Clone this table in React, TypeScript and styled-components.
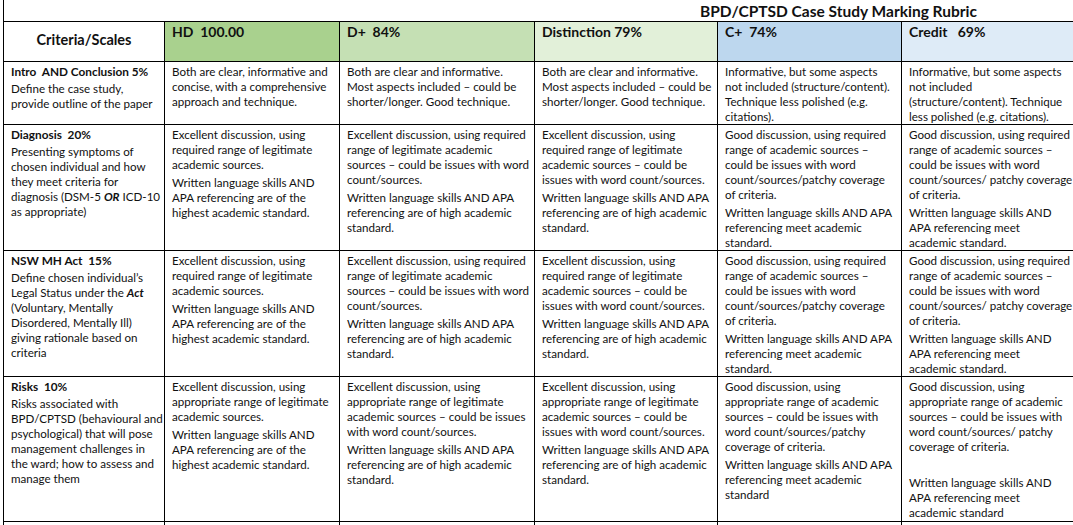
import styled, { createGlobalStyle } from 'styled-components';
import { ReactNode } from 'react';

const GlobalStyle = createGlobalStyle`
  *, *::before, *::after {
    box-sizing: border-box;
  }
  html, body {
    margin: 0;
    padding: 0;
    background: #ffffff;
  }
  body {
    font-family: Lato, 'Liberation Sans', sans-serif;
    color: #111;
  }
`;

const Page = styled.div`
  padding-left: 3px;
  width: 1073px;
`;

const TitleBar = styled.div`
  height: 21px;
  width: 1070px;
  border-left: 1px solid #000;
  display: flex;
  justify-content: flex-end;
  align-items: center;
  padding-right: 96px;
`;

const Title = styled.h1`
  margin: 0;
  font-size: 15.5px;
  font-weight: 700;
  color: #111;
`;

const Table = styled.table`
  border-collapse: collapse;
  table-layout: fixed;
  width: 1070px;
`;

const Col = styled.col<{ $width: number }>`
  width: ${({ $width }) => $width}px;
`;

const HeadCell = styled.th<{ $bg: string }>`
  height: 40px;
  background: ${({ $bg }) => $bg};
  border: 1px solid #000;
  padding: 1px 7px 0;
  vertical-align: top;
  text-align: left;
  font-size: 14px;
  font-weight: 700;
  white-space: pre;
  color: #111;
`;

const CriteriaHead = styled.th`
  height: 40px;
  border: 1px solid #000;
  padding: 0 0 5px;
  vertical-align: middle;
  text-align: center;
  font-size: 14.5px;
  font-weight: 700;
`;

const BodyRow = styled.tr<{ $height: number }>`
  height: ${({ $height }) => $height}px;
`;

const Cell = styled.td`
  border: 1px solid #000;
  padding: 2px 4px 0 7px;
  vertical-align: top;
  font-size: 11.6px;
  line-height: 15px;
  white-space: nowrap;
  overflow: hidden;
`;

const CriteriaTitle = styled.div`
  font-weight: 700;
  font-size: 11.8px;
  white-space: pre;
  margin-bottom: 2px;
`;

const Paragraph = styled.p`
  margin: 0;
  min-height: 15px;

  & + & {
    margin-top: 3px;
  }
`;

const Emph = styled.b`
  font-style: italic;
`;

type Line = ReactNode;
type Para = Line[];
type CellData = Para[];

interface Grade {
  label: string;
  bg: string;
  width: number;
}

const grades: Grade[] = [
  { label: 'HD  100.00', bg: '#a9d18e', width: 175 },
  { label: 'D+  84%', bg: '#c5e0b4', width: 195 },
  { label: 'Distinction 79%', bg: '#e2f0d9', width: 183 },
  { label: 'C+  74%', bg: '#bdd7ee', width: 184 },
  { label: 'Credit   69%', bg: '#deebf7', width: 172 },
];

interface Row {
  title: string;
  desc: Line[];
  cells: CellData[];
  height: number;
}

const excellentReq: CellData = [
  ['Excellent discussion, using', 'required range of legitimate', 'academic sources.'],
  ['Written language skills AND', 'APA referencing are of the', 'highest academic standard.'],
];

const dPlusReq: CellData = [
  ['Excellent discussion, using required', 'range of legitimate academic', 'sources – could be issues with word', 'count/sources.'],
  ['Written language skills AND APA', 'referencing are of high academic', 'standard.'],
];

const distReq: CellData = [
  ['Excellent discussion, using', 'required range of legitimate', 'academic sources – could be', 'issues with word count/sources.'],
  ['Written language skills AND APA', 'referencing are of high academic', 'standard.'],
];

const cPlusReq: CellData = [
  ['Good discussion, using required', 'range of academic sources –', 'could be issues with word', 'count/sources/patchy coverage', 'of criteria.'],
  ['Written language skills AND APA', 'referencing meet academic', 'standard.'],
];

const creditReq: CellData = [
  ['Good discussion, using required', 'range of academic sources –', 'could be issues with word', 'count/sources/ patchy coverage', 'of criteria.'],
  ['Written language skills AND', 'APA referencing meet', 'academic standard.'],
];

const rows: Row[] = [
  {
    title: 'Intro  AND Conclusion 5%',
    desc: ['Define the case study,', 'provide outline of the paper'],
    height: 62,
    cells: [
      [['Both are clear, informative and', 'concise, with a comprehensive', 'approach and technique.']],
      [['Both are clear and informative.', 'Most aspects included – could be', 'shorter/longer. Good technique.']],
      [['Both are clear and informative.', 'Most aspects included – could be', 'shorter/longer. Good technique.']],
      [['Informative, but some aspects', 'not included (structure/content).', 'Technique less polished (e.g.', 'citations).']],
      [['Informative, but some aspects', 'not included', '(structure/content). Technique', 'less polished (e.g. citations).']],
    ],
  },
  {
    title: 'Diagnosis  20%',
    desc: [
      'Presenting symptoms of',
      'chosen individual and how',
      'they meet criteria for',
      <>diagnosis (DSM-5 <Emph>OR</Emph> ICD-10</>,
      'as appropriate)',
    ],
    height: 126,
    cells: [excellentReq, dPlusReq, distReq, cPlusReq, creditReq],
  },
  {
    title: 'NSW MH Act  15%',
    desc: [
      'Define chosen individual’s',
      <>Legal Status under the <Emph>Act</Emph></>,
      '(Voluntary, Mentally',
      'Disordered, Mentally Ill)',
      'giving rationale based on',
      'criteria',
    ],
    height: 126,
    cells: [excellentReq, dPlusReq, distReq, cPlusReq, creditReq],
  },
  {
    title: 'Risks  10%',
    desc: [
      'Risks associated with',
      'BPD/CPTSD (behavioural and',
      'psychological) that will pose',
      'management challenges in',
      'the ward; how to assess and',
      'manage them',
    ],
    height: 145,
    cells: [
      [
        ['Excellent discussion, using', 'appropriate range of legitimate', 'academic sources.'],
        ['Written language skills AND', 'APA referencing are of the', 'highest academic standard.'],
      ],
      [
        ['Excellent discussion, using', 'appropriate range of legitimate', 'academic sources – could be issues', 'with word count/sources.'],
        ['Written language skills AND APA', 'referencing are of high academic', 'standard.'],
      ],
      [
        ['Excellent discussion, using', 'appropriate range of legitimate', 'academic sources – could be', 'issues with word count/sources.'],
        ['Written language skills AND APA', 'referencing are of high academic', 'standard.'],
      ],
      [
        ['Good discussion, using', 'appropriate range of academic', 'sources – could be issues with', 'word count/sources/patchy', 'coverage of criteria.'],
        ['Written language skills AND APA', 'referencing meet academic', 'standard'],
      ],
      [
        ['Good discussion, using', 'appropriate range of academic', 'sources – could be issues with', 'word count/sources/ patchy', 'coverage of criteria.'],
        [''],
        ['Written language skills AND', 'APA referencing meet', 'academic standard'],
      ],
    ],
  },
];

const Lines = ({ lines }: { lines: Line[] }) => (
  <>
    {lines.map((line, i) => (
      <span key={i}>
        {line}
        {i < lines.length - 1 && <br />}
      </span>
    ))}
  </>
);

export default function App() {
  return (
    <>
      <GlobalStyle />
      <Page>
        <TitleBar>
          <Title>BPD/CPTSD Case Study Marking Rubric</Title>
        </TitleBar>
        <Table>
          <colgroup>
            <Col $width={161} />
            {grades.map((g) => (
              <Col key={g.label} $width={g.width} />
            ))}
          </colgroup>
          <thead>
            <tr>
              <CriteriaHead>Criteria/Scales</CriteriaHead>
              {grades.map((g) => (
                <HeadCell key={g.label} $bg={g.bg}>
                  {g.label}
                </HeadCell>
              ))}
            </tr>
          </thead>
          <tbody>
            {rows.map((row) => (
              <BodyRow key={row.title} $height={row.height}>
                <Cell>
                  <CriteriaTitle>{row.title}</CriteriaTitle>
                  <Paragraph>
                    <Lines lines={row.desc} />
                  </Paragraph>
                </Cell>
                {row.cells.map((cell, ci) => (
                  <Cell key={ci}>
                    {cell.map((para, pi) => (
                      <Paragraph key={pi}>
                        <Lines lines={para} />
                      </Paragraph>
                    ))}
                  </Cell>
                ))}
              </BodyRow>
            ))}
            <BodyRow $height={40}>
              <Cell />
              {grades.map((g) => (
                <Cell key={g.label} />
              ))}
            </BodyRow>
          </tbody>
        </Table>
      </Page>
    </>
  );
}
